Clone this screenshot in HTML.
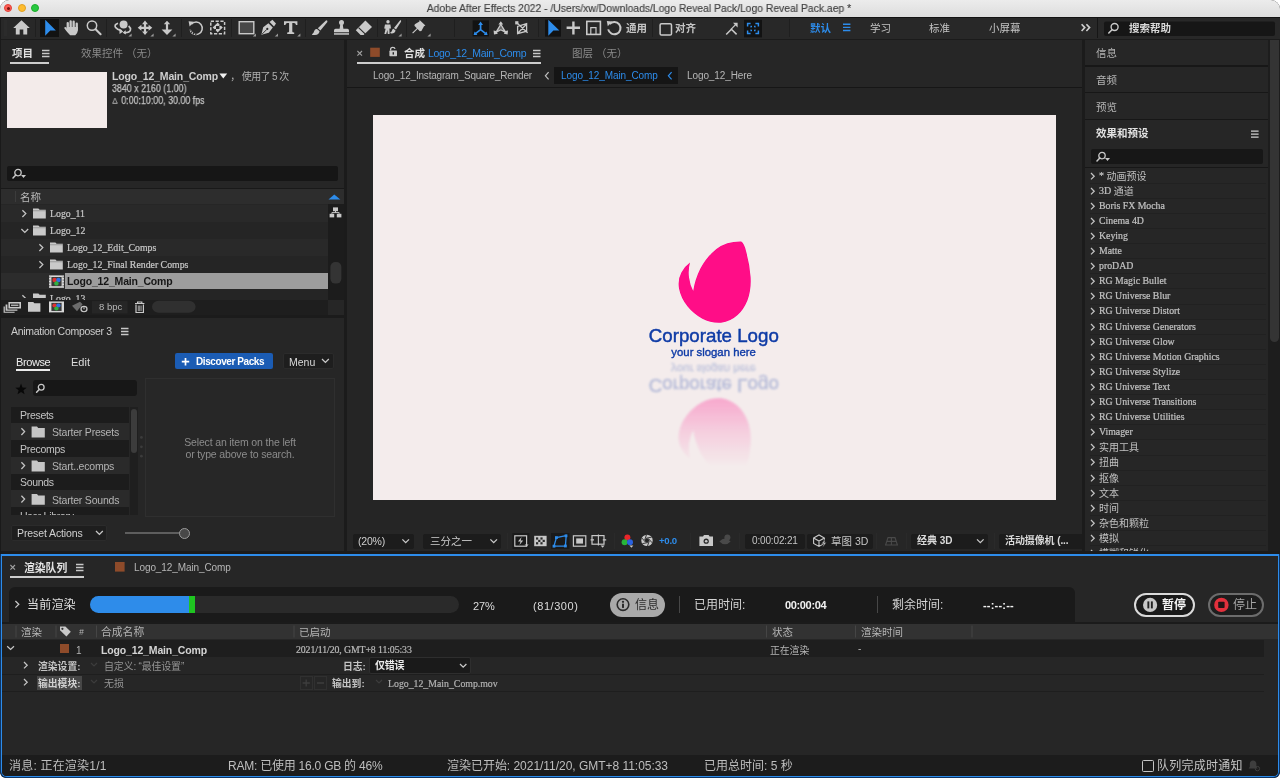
<!DOCTYPE html>
<html><head><meta charset="utf-8">
<style>
*{box-sizing:border-box;margin:0;padding:0}
html,body{width:1280px;height:778px;overflow:hidden;background:#fff}
body{font-family:"Liberation Sans","Noto Sans CJK SC",sans-serif;font-size:11px;color:#b4b4b4;position:relative}
.abs{position:absolute}
div{white-space:nowrap}
#win{position:absolute;left:0;top:0;width:1280px;height:778px;background:#1b1b1b;border-radius:9px 9px 6px 6px;overflow:hidden}
#title{position:absolute;left:0;top:0;width:1280px;height:16.5px;background:linear-gradient(#ececec,#dddddd)}
#title .t{position:absolute;left:0;width:1280px;top:1px;text-align:center;font-size:11px;color:#404040;-webkit-text-stroke:0.15px #404040;transform:scaleX(0.942);transform-origin:639px 0;left:-1.5px}
.tl{position:absolute;top:4.4px;width:8px;height:8px;border-radius:50%}
#toolbar{position:absolute;left:0;top:17px;width:1280px;height:22px;background:#282828;border-top:1px solid #131313}
.panel{position:absolute;background:#262626;overflow:hidden}
.serif{font-family:"Liberation Serif","Noto Sans CJK SC",serif;-webkit-text-stroke:0.22px currentColor}
.sans{font-family:"Liberation Sans","Noto Sans CJK SC",sans-serif;position:relative;top:0.6px;-webkit-text-stroke:0}
.t{position:absolute;line-height:14px;white-space:nowrap;will-change:transform}
.b{font-weight:bold}
.ul{position:absolute;height:2px;background:#cdcdcd}
.tb-t{will-change:transform;position:absolute;top:3px;font-size:10.5px;color:#c4c4c4;white-space:nowrap;line-height:14px}
.dim{color:#8a8a8a}
.wh{color:#e2e2e2}
.bl{color:#2d8ceb}
.box{position:absolute;background:#1c1c1c;border-radius:2px}
</style></head><body>
<div id="win">
<div id="title">
  <div class="tl" style="left:4.4px;background:#fe5f57;border:0.5px solid #e14138"><div style="position:absolute;left:2px;top:2px;width:3px;height:3px;border-radius:50%;background:#7a1510"></div></div>
  <div class="tl" style="left:17.9px;background:#febc2e;border:0.5px solid #dfa023"></div>
  <div class="tl" style="left:31px;background:#28c840;border:0.5px solid #1dad2b"></div>
  <div class="t">Adobe After Effects 2022 - /Users/xw/Downloads/Logo Reveal Pack/Logo Reveal Pack.aep *</div>
</div>
<div id="toolbar">
<svg class="abs" style="left:0;top:-1px" width="1280" height="22" viewBox="0 17 1280 22">
<g fill="#c9c9c9" stroke="none">
<!-- grip -->
<rect x="4" y="20" width="3" height="16" fill="#2b2b2b"/>
<rect x="35" y="19" width="1" height="18" fill="#1f1f1f"/>
<rect x="106" y="19" width="1" height="18" fill="#1f1f1f"/>
<rect x="181" y="19" width="1" height="18" fill="#1f1f1f"/>
<rect x="231" y="19" width="1" height="18" fill="#1f1f1f"/>
<rect x="305" y="19" width="1" height="18" fill="#1f1f1f"/>
<rect x="377" y="19" width="1" height="18" fill="#1f1f1f"/>
<rect x="406" y="19" width="1" height="18" fill="#1f1f1f"/>
<rect x="454" y="19" width="1" height="18" fill="#1f1f1f"/>
<rect x="538" y="19" width="1" height="18" fill="#1f1f1f"/>
<rect x="652" y="19" width="1" height="18" fill="#1f1f1f"/>
<rect x="789" y="19" width="1" height="18" fill="#1f1f1f"/>
<!-- home -->
<path d="M21.5 20.3 L29.8 27.9 H27.2 V34.5 H23.3 V29.6 H19.7 V34.5 H15.8 V27.9 H13.2 Z"/>
<!-- select (active) -->
<rect x="40" y="19" width="19" height="18" fill="#121212"/>
<path d="M45.2 19.8 L55.9 30.4 L50.2 30.6 L45.2 35.8 Z" fill="#2d8ceb"/>
<!-- hand -->
<g>
<rect x="66.6" y="22" width="2.3" height="8" rx="1.1"/>
<rect x="69.5" y="20.3" width="2.3" height="9" rx="1.1"/>
<rect x="72.5" y="20.6" width="2.3" height="9" rx="1.1"/>
<rect x="75.6" y="22.6" width="2.3" height="8" rx="1.1"/>
<path d="M66.6 27 H77.9 V30.5 Q77.5 33.5 75.3 35.2 H70.2 Q68 33.5 64.3 28.3 Q64.3 26.6 66 27.3 L67.6 29.5 Z"/>
</g>
<!-- zoom -->
<circle cx="92" cy="25.6" r="4.7" fill="none" stroke="#c9c9c9" stroke-width="1.5"/>
<path d="M95.6 29.2 L100.6 34.2" stroke="#c9c9c9" stroke-width="2.1" stroke-linecap="round"/>
<!-- orbit -->
<circle cx="123.6" cy="24.6" r="4"/>
<path d="M118 23.2 Q113.8 24.6 115.6 27.6 Q117.5 30.2 121.8 30.8 M124 32.6 Q129.4 33 130.4 30 Q130.8 27.8 128.6 26" fill="none" stroke="#c9c9c9" stroke-width="1.7"/>
<path d="M119.2 28.6 L123.2 31.4 L119.6 34 Z M125.6 30.2 L122.6 32.8 L126 34.6Z"/>
<path d="M131.6 33.4 V36.6 H128.4 Z" fill="#9a9a9a"/>
<!-- move -->
<path d="M145 20.6 L148 24.2 H146.1 V26.7 H148.6 V24.8 L152.3 27.8 L148.6 30.8 V28.9 H146.1 V31.4 H148 L145 35 L142 31.4 H143.9 V28.9 H141.4 V30.8 L137.7 27.8 L141.4 24.8 V26.7 H143.9 V24.2 H142 Z"/>
<path d="M153.6 33.4 V36.6 H150.4 Z" fill="#9a9a9a"/>
<!-- dolly -->
<path d="M167 20.8 L170.2 24.2 H168.1 V29.6 H172.4 L167 35 L161.6 29.6 H165.9 V24.2 H163.8 Z"/>
<path d="M175.6 33.4 V36.6 H172.4 Z" fill="#9a9a9a"/>
<!-- rotate -->
<path d="M191.3 24.3 A6.2 6.2 0 1 1 190 29.5" fill="none" stroke="#c9c9c9" stroke-width="1.5"/>
<path d="M190 29.5 A6.2 6.2 0 0 0 197 34.1" fill="none" stroke="#262626" stroke-width="1.7" stroke-dasharray="1.2 1.2"/>
<path d="M188.6 21.2 L193.8 21.8 L189.6 26.4 Z"/>
<!-- pan behind -->
<rect x="210.8" y="21.3" width="13.8" height="12.4" fill="none" stroke="#c9c9c9" stroke-width="1.5" stroke-dasharray="3.2 1.6"/>
<path d="M217.7 22.6 L221 26 H214.4 Z M217.7 32.4 L221 29 H214.4 Z M212.6 27.5 L216 24.2 V30.8 Z M222.8 27.5 L219.4 24.2 V30.8 Z"/>
<!-- rect -->
<rect x="239.2" y="21.7" width="14.6" height="12" fill="#484848" stroke="#c9c9c9" stroke-width="1.4"/>
<path d="M256 33.4 V36.6 H252.8 Z" fill="#9a9a9a"/>
<!-- pen -->
<path d="M261.4 34.8 L263.2 27.2 L268.4 23.2 L272.8 27.6 L268.8 32.8 Z M269.6 22 L272.4 19.8 L276 23.6 L274 26.4 Z"/>
<path d="M262.2 34 L266.6 29.6" stroke="#262626" stroke-width="0.9"/>
<circle cx="267.3" cy="28.9" r="1.1" fill="#262626"/>
<path d="M278 33.4 V36.6 H274.8 Z" fill="#9a9a9a"/>
<!-- T -->
<path d="M284 21.2 H297.4 V25 H296 Q295.6 22.9 294 22.9 H292.3 V31.4 Q292.3 32.5 294.2 32.6 V33.9 H287.2 V32.6 Q289.1 32.5 289.1 31.4 V22.9 H287.4 Q285.8 22.9 285.4 25 H284 Z"/>
<path d="M300.4 33.4 V36.6 H297.2 Z" fill="#9a9a9a"/>
<!-- brush -->
<path d="M326.2 20.2 Q327.8 20.4 327.4 22 L320.4 30.4 L317.8 28.2 Z"/>
<path d="M317 29 L319.6 31.2 Q319 34.6 315 35 Q312.6 35.2 311.8 34.4 Q314 33 314.2 31 Q314.8 28.8 317 29 Z"/>
<!-- stamp -->
<circle cx="341.5" cy="22.6" r="2.5"/>
<path d="M340.3 24 H342.7 L343.4 28.8 H347.4 Q349 28.8 349 30.4 V32.2 H334 V30.4 Q334 28.8 335.6 28.8 H339.6 Z"/>
<rect x="334" y="33.2" width="15" height="1.5"/>
<!-- eraser -->
<path d="M365.4 20.4 L372 27 L363.6 35 H360.6 L355.8 30.2 Z"/>
<path d="M358.6 27.6 L365.4 34.2" stroke="#262626" stroke-width="1.1"/>
<!-- roto -->
<circle cx="388" cy="21.8" r="1.7"/>
<path d="M385 24.4 H390.4 L391 28.4 L389.4 28.6 L389.6 34 H387.8 L387.4 30 L386.2 34 H384.4 L385.6 28.8 L384.2 28.6 Z"/>
<path d="M400.4 20 Q401.6 20.4 401 21.8 L396 29.4 L394 28 Z M393.4 28.8 L395.6 30.4 Q394.8 33.6 391.4 33.4 Q390.4 33.4 390 32.8 Q391.8 31.8 392 30.4 Q392.4 28.8 393.4 28.8Z"/>
<path d="M401.6 33.4 V36.6 H398.4 Z" fill="#9a9a9a"/>
<!-- pin -->
<path d="M419.6 20 L425.4 25.6 L424 26.2 L421.4 31 L419.8 31.2 L417.6 29 L413 33.6 L412.2 32.8 L416.8 28.2 L414.4 25.8 L414.8 24.2 L419.4 21.6 Z"/>
<path d="M430.6 33.4 V36.6 H427.4 Z" fill="#9a9a9a"/>
<!-- axis 1 active -->
<rect x="472.6" y="20.4" width="16.4" height="16" fill="#121212"/>
<g stroke="#2d8ceb" stroke-width="1.7" fill="#2d8ceb">
<path d="M480.6 24 V29.6 M480.6 29.6 L475.4 33.6 M480.6 29.6 L485.8 33.6" fill="none"/>
<path d="M480.6 21.4 L483 25 H478.2 Z M473.6 35 L474.6 31.4 L477.4 35 Z M487.6 35 L486.6 31.4 L483.8 35 Z" stroke="none"/>
</g>
<!-- axis 2 -->
<g fill="#c9c9c9">
<path d="M500.8 21.2 L503.2 24.6 H501.6 L505.6 31 L508 30.6 L507.6 34.4 L503.8 33.8 L504.6 32.4 L500.8 30.4 L497 32.4 L497.8 33.8 L494 34.4 L493.6 30.6 L496 31 L500 24.6 H498.4 Z"/>
<path d="M500.8 25.6 L503.6 30.4 L500.8 29.2 L498 30.4 Z" fill="#6a6a6a"/>
</g>
<!-- axis 3 -->
<g stroke="#c9c9c9" stroke-width="1.3" fill="none">
<path d="M517.6 26.4 L526.6 23.6 V31.2 L517.6 33.6 Z M517 23 L527.6 32.8 M517.8 33.2 L526.4 24.2"/>
<rect x="515.2" y="21.2" width="3.2" height="3.2" fill="#c9c9c9" stroke="none"/>
</g>
<!-- arrow active 2 -->
<rect x="545" y="19.6" width="16" height="17" fill="#121212"/>
<path d="M548.3 19.8 L559.4 30.4 L553.4 30.6 L548.3 35.8 Z" fill="#2d8ceb"/>
<!-- plus -->
<path d="M572.2 21.6 H574.6 V26.6 H580 V29 H574.6 V34.4 H572.2 V29 H566.6 V26.6 H572.2 Z"/>
<!-- square -->
<rect x="586.8" y="21.4" width="13.6" height="13" fill="none" stroke="#c9c9c9" stroke-width="1.6"/>
<path d="M590.8 34 V27.6 H596 V34" fill="none" stroke="#c9c9c9" stroke-width="1.2"/>
<!-- rotate2 -->
<path d="M609.6 24 A6.2 6.2 0 1 1 608.2 29.4" fill="none" stroke="#c9c9c9" stroke-width="2"/>
<path d="M606.8 21 L612 21.6 L607.8 26.2 Z"/>
<!-- checkbox -->
<rect x="660.1" y="23.7" width="11.4" height="11.4" rx="1.4" fill="none" stroke="#c9c9c9" stroke-width="1.5"/>
<!-- snap1 -->
<path d="M726.2 34.6 L731.4 29.2 L736.6 34.4" fill="none" stroke="#c9c9c9" stroke-width="1.5"/>
<path d="M731 29.4 L735.6 24.6" stroke="#c9c9c9" stroke-width="1.3"/>
<path d="M733 22.8 H737.6 V27.4 Z"/>
<!-- snap2 active -->
<rect x="744" y="19.8" width="18" height="17.6" fill="#121212"/>
<g fill="none" stroke="#2d8ceb" stroke-width="1.5">
<path d="M747.6 26.4 V23.6 H750.6 M755.4 23.6 H758.4 V26.4 M758.4 30.6 V33.4 H755.4 M750.6 33.4 H747.6 V30.6"/>
<path d="M751 27.4 V26.4 H752 M754 26.4 H755 V27.4 M755 29.6 V30.6 H754 M752 30.6 H751 V29.6" stroke-width="1.2"/>
</g>
<!-- menu glyph -->
<path d="M843 24.3 H850.4 M843 27.4 H850.4 M843 30.5 H850.4" stroke="#2d8ceb" stroke-width="1.4"/>
<!-- chevrons -->
<path d="M1081.6 24.2 L1084.8 27.6 L1081.6 31 M1086.4 24.2 L1089.6 27.6 L1086.4 31" fill="none" stroke="#d0d0d0" stroke-width="1.6"/>
<!-- search box -->
<rect x="1097" y="18" width="1" height="20" fill="#161616"/>
<rect x="1104" y="21.6" width="171" height="14.4" rx="2" fill="#161616"/>
<circle cx="1114.6" cy="27" r="3.5" fill="none" stroke="#c9c9c9" stroke-width="1.4"/>
<path d="M1112 29.8 L1108.8 33" stroke="#c9c9c9" stroke-width="1.6" stroke-linecap="round"/>
</g>
</svg>
<div class="tb-t b" style="left:626px">通用</div>
<div class="tb-t b" style="left:675px">对齐</div>
<div class="tb-t" style="left:810px;color:#2d8ceb;font-weight:bold">默认</div>
<div class="tb-t" style="left:870px">学习</div>
<div class="tb-t" style="left:929px">标准</div>
<div class="tb-t" style="left:989px">小屏幕</div>
<div class="tb-t" style="left:1129px;color:#d8d8d8;font-weight:bold">搜索帮助</div>
</div>
<!-- PROJECT PANEL : page origin (0,40) -->
<div class="panel" id="proj" style="left:0;top:40px;width:344px;height:275px">
  <div class="t b wh" style="left:12px;top:6px;font-size:10.5px">项目</div>
  <svg class="abs" style="left:42px;top:9px" width="8" height="9"><path d="M0 1.5H7.5M0 4.5H7.5M0 7.5H7.5" stroke="#c8c8c8" stroke-width="1.3"/></svg>
  <div class="ul" style="left:10px;top:21.5px;width:39px"></div>
  <div class="t dim" style="left:81px;top:6px;font-size:10.5px">效果控件 （无）</div>
  <div class="abs" style="left:7px;top:32px;width:100px;height:56px;background:#f3ebea"></div>
  <div class="t b" style="left:112px;top:29px;font-size:10.5px;color:#cfcfcf;letter-spacing:-0.15px">Logo_12_Main_Comp<svg width="9" height="6" style="margin-left:1px;position:relative;top:-1px"><path d="M0.4 0.4H8.2L4.3 5.4Z" fill="#f0f0f0"/></svg><span class="nb" style="font-weight:normal;font-size:10px;color:#b0b0b0;letter-spacing:-0.6px"> ， 使用了 5 次</span></div>
  <div class="t" style="left:112px;top:41px;font-size:10.5px;color:#c4c4c4;-webkit-text-stroke:0.25px #c4c4c4;transform:scaleX(0.845);transform-origin:0 0">3840 x 2160 (1.00)</div>
  <div class="t" style="left:112px;top:53px;font-size:10.5px;color:#c4c4c4;-webkit-text-stroke:0.25px #c4c4c4;transform:scaleX(0.845);transform-origin:0 0"><svg width="7" height="7" style="position:relative;top:0px;margin-right:1px"><path d="M0.7 6.3 L3.5 1 L6.3 6.3Z" fill="none" stroke="#c0c0c0" stroke-width="0.9"/></svg> 0:00:10:00, 30.00 fps</div>
  <!-- search -->
  <div class="abs" style="left:7px;top:126px;width:331px;height:15px;background:#161616;border-radius:2px"></div>
  <svg class="abs" style="left:12px;top:128px" width="16" height="12"><circle cx="6" cy="4.6" r="3.2" fill="none" stroke="#c8c8c8" stroke-width="1.3"/><path d="M3.8 7 L1 10" stroke="#c8c8c8" stroke-width="1.5" stroke-linecap="round"/><path d="M9 7H14L11.5 9.9Z" fill="#c8c8c8"/></svg>
  <!-- header -->
  <div class="abs" style="left:0;top:148px;width:344px;height:1px;background:#191919"></div>
  <div class="abs" style="left:0;top:149px;width:344px;height:15px;background:#2d2d2d"></div>
  <div class="abs" style="left:15px;top:151px;width:1px;height:11px;background:#3c3c3c"></div>
  <div class="t" style="left:20px;top:150px;font-size:10.5px;color:#b8b8b8">名称</div>
  <svg class="abs" style="left:328px;top:154px" width="13" height="6"><path d="M0.5 5.5 L6.3 0.5 L12.3 5.5Z" fill="#2d8ceb"/></svg>
  <!-- rows -->
  <div class="abs" style="left:0;top:165px;width:328px;height:17px;background:#292929"></div>
  <div class="abs" style="left:0;top:182px;width:328px;height:17px;background:#252525"></div>
  <div class="abs" style="left:0;top:199px;width:328px;height:17px;background:#292929"></div>
  <div class="abs" style="left:0;top:216px;width:328px;height:17px;background:#252525"></div>
  <div class="abs" style="left:0;top:233px;width:328px;height:16px;background:#2c2c2c"></div>
  <div class="abs" style="left:65px;top:233px;width:263px;height:16px;background:#9d9d9d"></div>
  <div class="abs" style="left:0;top:249px;width:328px;height:10.5px;background:#252525"></div>
  <div class="abs" style="left:328px;top:164px;width:16px;height:95.5px;background:#1c1c1c"></div>
  <svg class="abs" style="left:0;top:164px" width="344" height="94" viewBox="0 204 344 94">
    <g fill="none" stroke="#c4c4c4" stroke-width="1.3">
      <path d="M22.4 210.2 L25.8 213.6 L22.4 217"/>
      <path d="M21.4 229 L24.8 232.4 L28.2 229"/>
      <path d="M39.4 244.2 L42.8 247.6 L39.4 251"/>
      <path d="M39.4 261.2 L42.8 264.6 L39.4 268"/>
      <path d="M22.4 295.2 L25.8 298.6"/>
    </g>
    <g fill="#c9c9c9">
      <path d="M33 208.4 H38.4 L39.6 209.8 H45.8 V218.6 H33Z"/>
      <path d="M33 225.4 H38.4 L39.6 226.8 H45.8 V235.6 H33Z"/>
      <path d="M50 242.4 H55.4 L56.6 243.8 H62.8 V252.6 H50Z"/>
      <path d="M50 259.4 H55.4 L56.6 260.8 H62.8 V269.6 H50Z"/>
      <path d="M33 293.4 H38.4 L39.6 294.8 H45.8 V298 H33Z"/>
    </g>
    <g fill="#262626" opacity="0.35"><rect x="33" y="210.4" width="12.8" height="0.8"/><rect x="33" y="227.4" width="12.8" height="0.8"/><rect x="50" y="244.4" width="12.8" height="0.8"/><rect x="50" y="261.4" width="12.8" height="0.8"/></g>
    <!-- comp icon -->
    <g>
      <rect x="49" y="275.4" width="15" height="12.4" fill="#d8d8d8"/>
      <rect x="51.4" y="277" width="10.2" height="9.2" fill="#3a3a3a"/>
      <circle cx="54.6" cy="280" r="2.2" fill="#e03030"/><circle cx="58.4" cy="280" r="2.2" fill="#3070e0"/><circle cx="56.4" cy="283.4" r="2.2" fill="#30b040"/>
      <path d="M49.8 276.6v1.4M49.8 279.4v1.4M49.8 282.2v1.4M49.8 285v1.4M63.2 276.6v1.4M63.2 279.4v1.4M63.2 282.2v1.4M63.2 285v1.4" stroke="#555" stroke-width="0.9"/>
    </g>
    <!-- flowchart icon -->
    <g fill="#c9c9c9"><rect x="333" y="207.4" width="5" height="3.8"/><rect x="329.6" y="213.8" width="4.6" height="3.6"/><rect x="336.8" y="213.8" width="4.6" height="3.6"/><path d="M335.5 211v1.6M331.9 213.8v-1.2h7.2v1.2" stroke="#c9c9c9" fill="none" stroke-width="1"/></g>
    <rect x="330.4" y="262" width="11" height="21.6" rx="5" fill="#343434"/>
  </svg>
  <div class="t serif" style="left:50px;top:166.5px;font-size:9.8px;color:#c6c6c6">Logo_11</div>
  <div class="t serif" style="left:50px;top:183.5px;font-size:9.8px;color:#c6c6c6">Logo_12</div>
  <div class="t serif" style="left:67px;top:200.5px;font-size:9.8px;color:#c6c6c6">Logo_12_Edit_Comps</div>
  <div class="t serif" style="left:67px;top:217.5px;font-size:9.8px;color:#c6c6c6">Logo_12_Final Render Comps</div>
  <div class="t b" style="left:67px;top:234px;font-size:10.5px;color:#161616;letter-spacing:-0.18px">Logo_12_Main_Comp</div>
  <div class="t serif" style="left:50px;top:251.5px;font-size:9.8px;color:#c6c6c6">Logo_13</div>
  <!-- footer -->
  <div class="abs" style="left:0;top:259.5px;width:344px;height:15.5px;background:#262626"></div>
  <div class="abs" style="left:0;top:259.5px;width:328px;height:15.5px;background:#1e1e1e"></div>
  <svg class="abs" style="left:0;top:258px" width="344" height="17" viewBox="0 298 344 17">
    <g fill="#c9c9c9" transform="translate(0,307) scale(1,0.88) translate(0,-306.3)">
      <path d="M8.4 300.6 H21 V308 H8.4Z M5.6 303.4 H7.4 V309.2 H17.4 V310.6 H5.6Z M3.6 305.6 H4.8 V311.6 H14.6 V312.8 H3.6Z"/>
      <rect x="10" y="302.4" width="9.4" height="3.8" fill="#1e1e1e"/><rect x="11" y="303.6" width="7.4" height="1.4" fill="#c9c9c9"/>
      <path d="M28 300.6 H33.2 L34.4 302 H40.4 V311.8 H28Z"/>
      <rect x="49" y="300" width="15" height="12.4" fill="#d8d8d8"/>
      <rect x="51.4" y="301.6" width="10.2" height="9.2" fill="#3a3a3a"/>
      <circle cx="54.6" cy="304.6" r="2.2" fill="#e03030"/><circle cx="58.4" cy="304.6" r="2.2" fill="#3070e0"/><circle cx="56.4" cy="308" r="2.2" fill="#30b040"/>
      <g opacity="0.45"><path d="M72 305 L80 300.4 L82.6 303.2 L77 311 Z"/></g>
      <circle cx="84" cy="308.6" r="3" fill="#1e1e1e" stroke="#c9c9c9" stroke-width="1.2"/><path d="M84 306.6V308.8" stroke="#c9c9c9" stroke-width="1.1"/>
      <rect x="92" y="299.6" width="35.6" height="14" fill="#262626"/>
      <path d="M135 302.4 H144.4 M137.6 302.2 V300.6 H141.8 V302.2 M136 303.4 V312.6 H143.4 V303.4" fill="none" stroke="#c9c9c9" stroke-width="1.2"/>
      <path d="M138.3 304.6V311M139.7 304.6V311M141.1 304.6V311" stroke="#c9c9c9" stroke-width="0.8"/>
      <rect x="152" y="299.2" width="43.6" height="13.6" rx="6.8" fill="#303030"/>
    </g>
  </svg>
  <div class="t" style="left:99px;top:260px;font-size:9.5px;color:#b8b8b8">8 bpc</div>
</div>
<!-- AC PANEL : origin (0,318) -->
<div class="panel" id="ac" style="left:0;top:318px;width:344px;height:233px">
  <div class="t" style="left:11px;top:6px;font-size:10.5px;color:#cdcdcd;letter-spacing:-0.3px">Animation Composer 3</div>
  <svg class="abs" style="left:121px;top:9px" width="8" height="9"><path d="M0 1.5H7.5M0 4.5H7.5M0 7.5H7.5" stroke="#c8c8c8" stroke-width="1.3"/></svg>
  <div class="t" style="left:16px;top:36.5px;font-size:11px;color:#ededed;letter-spacing:-0.4px">Browse</div>
  <div class="ul" style="left:16px;top:51px;width:34px;background:#ededed"></div>
  <div class="t" style="left:71px;top:36.5px;font-size:11px;color:#dcdcdc">Edit</div>
  <div class="abs" style="left:175px;top:35px;width:98px;height:16px;background:#1b5cb4;border-radius:2px"></div>
  <svg class="abs" style="left:181px;top:39px" width="10" height="10"><path d="M4.5 1V8.4M0.8 4.7H8.2" stroke="#fff" stroke-width="1.7"/></svg><div class="t b" style="left:196px;top:37px;font-size:10px;color:#fff;letter-spacing:-0.42px">Discover Packs</div>
  <div class="abs" style="left:283px;top:35px;width:51px;height:16px;background:#1e1e1e;border:1px solid #2b2b2b;border-radius:2px"></div>
  <div class="t" style="left:288.5px;top:36.5px;font-size:10.5px;color:#dadada">Menu</div>
  <svg class="abs" style="left:321px;top:40px" width="9" height="6"><path d="M1 1 L4.4 4.4 L7.8 1" fill="none" stroke="#c8c8c8" stroke-width="1.3"/></svg>
  <!-- star + search -->
  <svg class="abs" style="left:14.5px;top:64.5px" width="13" height="13" viewBox="0 0 14 14"><path d="M6.5 0.6 L8.1 4.8 L12.6 5 L9.1 7.8 L10.3 12.2 L6.5 9.7 L2.7 12.2 L3.9 7.8 L0.4 5 L4.9 4.8Z" fill="#080808"/></svg>
  <div class="abs" style="left:33px;top:62px;width:104px;height:16px;background:#171717;border-radius:3px"></div>
  <svg class="abs" style="left:35px;top:65px" width="11" height="11"><circle cx="6.2" cy="4.2" r="2.9" fill="none" stroke="#c8c8c8" stroke-width="1.3"/><path d="M4.2 6.4 L1.6 9.2" stroke="#c8c8c8" stroke-width="1.5" stroke-linecap="round"/></svg>
  <!-- list -->
  <div class="abs" style="left:11px;top:89px;width:118px;height:108px;overflow:hidden;background:#2a2a2a">
    <div class="abs" style="left:0;top:0;width:118px;height:16px;background:#1c1c1c"></div>
    <div class="abs" style="left:0;top:33px;width:118px;height:17px;background:#1c1c1c"></div>
    <div class="abs" style="left:0;top:67px;width:118px;height:16px;background:#1c1c1c"></div>
    <div class="abs" style="left:0;top:100px;width:118px;height:16px;background:#1c1c1c"></div>
    <div class="t" style="left:8.5px;top:1px;font-size:10.5px;color:#c4c4c4;letter-spacing:-0.3px">Presets</div>
    <div class="t" style="left:41px;top:18px;font-size:10.5px;color:#b4b4b4;letter-spacing:-0.2px">Starter Presets</div>
    <div class="t" style="left:8.5px;top:35px;font-size:10.5px;color:#c4c4c4;letter-spacing:-0.3px">Precomps</div>
    <div class="t" style="left:41px;top:52px;font-size:10.5px;color:#b4b4b4;letter-spacing:-0.2px">Start..ecomps</div>
    <div class="t" style="left:8.5px;top:68px;font-size:10.5px;color:#c4c4c4;letter-spacing:-0.3px">Sounds</div>
    <div class="t" style="left:41px;top:85.5px;font-size:10.5px;color:#b4b4b4;letter-spacing:-0.2px">Starter Sounds</div>
    <div class="t" style="left:8.5px;top:102px;font-size:10.5px;color:#c4c4c4;letter-spacing:-0.3px">User Library</div>
    <svg class="abs" style="left:0;top:0" width="118" height="108">
      <g fill="none" stroke="#c4c4c4" stroke-width="1.3"><path d="M10.4 21.2 L13.6 24.6 L10.4 28"/><path d="M10.4 55.2 L13.6 58.6 L10.4 62"/><path d="M10.4 88.7 L13.6 92.1 L10.4 95.5"/></g>
      <g fill="#c6c6c6"><path d="M20.6 19.6 H26 L27.2 21 H33.8 V30.4 H20.6Z"/><path d="M20.6 53.6 H26 L27.2 55 H33.8 V64.4 H20.6Z"/><path d="M20.6 87 H26 L27.2 88.4 H33.8 V97.8 H20.6Z"/></g>
    </svg>
  </div>
  <div class="abs" style="left:130px;top:89px;width:8px;height:108px;background:#1f1f1f"></div>
  <div class="abs" style="left:131px;top:91px;width:6px;height:44px;background:#3c3c3c;border-radius:3px"></div>
  <svg class="abs" style="left:139px;top:116px" width="5" height="26"><circle cx="2.4" cy="3.4" r="1.4" fill="#3c3c3c"/><circle cx="2.4" cy="12.8" r="1.4" fill="#3c3c3c"/><circle cx="2.4" cy="22.2" r="1.4" fill="#3c3c3c"/></svg>
  <div class="abs" style="left:145px;top:60px;width:190px;height:139px;border:1px solid #2f2f2f;background:#272727"></div>
  <div class="t" style="left:145px;top:116.5px;width:190px;text-align:center;font-size:10.5px;color:#8c8c8c;letter-spacing:-0.15px">Select an item on the left</div>
  <div class="t" style="left:145px;top:129px;width:190px;text-align:center;font-size:10.5px;color:#8c8c8c;letter-spacing:-0.15px">or type above to search.</div>
  <!-- preset actions -->
  <div class="abs" style="left:11px;top:207px;width:96px;height:16px;background:#1e1e1e;border:1px solid #2b2b2b;border-radius:2px"></div>
  <div class="t" style="left:16.5px;top:208px;font-size:10.5px;color:#d0d0d0;letter-spacing:-0.1px">Preset Actions</div>
  <svg class="abs" style="left:95px;top:212px" width="9" height="6"><path d="M1 1 L4.4 4.4 L7.8 1" fill="none" stroke="#c8c8c8" stroke-width="1.3"/></svg>
  <div class="abs" style="left:125px;top:214px;width:55px;height:2px;background:#5e5e5e"></div>
  <div class="abs" style="left:178.5px;top:209.5px;width:11px;height:11px;border-radius:50%;background:#484848;border:1.5px solid #9a9a9a"></div>
</div>
<!-- COMP PANEL : origin (347,40) -->
<div class="panel" id="comp" style="left:347px;top:40px;width:735px;height:511px">
  <svg class="abs" style="left:0;top:0" width="300" height="25" viewBox="347 40 300 25">
    <path d="M357.4 51 L362 55.6 M362 51 L357.4 55.6" stroke="#a0a0a0" stroke-width="1.1"/>
    <rect x="370.2" y="47.7" width="9.6" height="9.2" fill="#8e4b2a"/>
    <g fill="#c9c9c9"><rect x="389.4" y="50.6" width="7.6" height="5.6" rx="0.6"/><path d="M390.6 50.6 V49.4 Q390.6 47.4 392.8 47.4 Q394.8 47.4 395 48.8" fill="none" stroke="#c9c9c9" stroke-width="1.3"/><rect x="392.6" y="52.2" width="1.4" height="2.4" fill="#262626"/></g>
    <path d="M533 50.5H540.5M533 53.5H540.5M533 56.5H540.5" stroke="#c8c8c8" stroke-width="1.3"/>
  </svg>
  <div class="t b wh" style="left:57px;top:6px;font-size:10.5px">合成</div>
  <div class="t bl" style="left:81px;top:6px;font-size:10.5px;letter-spacing:-0.3px">Logo_12_Main_Comp</div>
  <div class="ul" style="left:10px;top:21.5px;width:184px"></div>
  <div class="t dim" style="left:225px;top:6px;font-size:10.5px">图层 （无）</div>
  <!-- breadcrumb -->
  <div class="t" style="left:26px;top:29px;font-size:10px;color:#b6b6b6;letter-spacing:-0.2px">Logo_12_Instagram_Square_Render</div>
  <svg class="abs" style="left:197px;top:31px" width="6" height="10"><path d="M4.6 1.2 L1.4 4.8 L4.6 8.4" fill="none" stroke="#c0c0c0" stroke-width="1.2"/></svg>
  <div class="abs" style="left:207px;top:27px;width:124px;height:17px;background:#151515"></div>
  <div class="t bl" style="left:214px;top:29px;font-size:10px;letter-spacing:-0.1px">Logo_12_Main_Comp</div>
  <svg class="abs" style="left:320px;top:31px" width="6" height="10"><path d="M4.6 1.2 L1.4 4.8 L4.6 8.4" fill="none" stroke="#2d8ceb" stroke-width="1.2"/></svg>
  <div class="t" style="left:340px;top:29px;font-size:10px;color:#b6b6b6;letter-spacing:-0.1px">Logo_12_Here</div>
  <div class="abs" style="left:0;top:47px;width:735px;height:1px;background:#161616"></div>
  <div class="abs" style="left:0;top:48px;width:735px;height:442px;background:#252525"></div>
  <!-- composition -->
  <div class="abs" id="cv" style="left:26px;top:75px;width:683px;height:385px;background:#f4ecec;overflow:hidden">
  <svg class="abs" style="left:0;top:0" width="683" height="385" viewBox="373 115 683 385">
<defs>
<filter id="bl1" x="-10%" y="-10%" width="120%" height="120%"><feGaussianBlur stdDeviation="1.3"/></filter>
<filter id="bl0" x="-10%" y="-10%" width="120%" height="120%"><feGaussianBlur stdDeviation="0.45"/></filter>
<linearGradient id="fade" x1="0" y1="361" x2="0" y2="467" gradientUnits="userSpaceOnUse">
<stop offset="0" stop-color="#fff" stop-opacity="0.2"/><stop offset="0.2" stop-color="#fff" stop-opacity="0.27"/><stop offset="0.36" stop-color="#fff" stop-opacity="0.3"/><stop offset="0.65" stop-color="#fff" stop-opacity="0.14"/><stop offset="1" stop-color="#fff" stop-opacity="0"/>
</linearGradient>
<mask id="mk" maskUnits="userSpaceOnUse" x="373" y="355" width="683" height="145"><rect x="373" y="355" width="683" height="145" fill="url(#fade)"/></mask>
<g id="lg">
<path d="M741.2 241.6 Q744.2 243.6 746 251 Q749.6 264 750.6 277 Q751.4 290 747.4 300.4 Q743.6 309.6 737.6 315 Q730.6 321.4 721 322.8 Q711 323.4 702.4 318.8 Q694 314.4 687.6 306.6 Q681 298.6 679 288.6 Q677.6 279.4 681.4 272.6 Q684.6 266.4 690 262.6 Q688 270 689 277.4 Q690 285 693.2 291 Q695 279.4 700.4 268.6 Q706.4 257 716.4 249 Q726.6 241.4 741.2 241.6 Z" fill="#ff0787"/>
<text x="713.8" y="342.4" text-anchor="middle" font-family="Liberation Sans, sans-serif" font-size="18.6" fill="#0d3ba6" stroke="#0d3ba6" stroke-width="0.45" textLength="130" lengthAdjust="spacingAndGlyphs">Corporate Logo</text>
<text x="713.6" y="355.8" text-anchor="middle" font-family="Liberation Sans, sans-serif" font-size="11.6" fill="#0d3ba6" stroke="#0d3ba6" stroke-width="0.4" textLength="84.5" lengthAdjust="spacingAndGlyphs">your slogan here</text>
</g>
</defs>
<use href="#lg" filter="url(#bl0)"/>
<g mask="url(#mk)"><g transform="translate(0,721) scale(1,-1)" filter="url(#bl1)"><use href="#lg"/></g></g>
</svg>

  </div>
  <!-- footer -->
  <div class="abs" style="left:0;top:490px;width:735px;height:21px;background:#262626"></div>
  <div class="box" style="left:6px;top:493.5px;width:61px;height:15px"></div>
  <div class="t" style="left:11px;top:494px;font-size:10.5px;color:#cfcfcf;letter-spacing:-0.2px">(20%)</div>
  <div class="box" style="left:76px;top:493.5px;width:78px;height:15px"></div>
  <div class="t" style="left:82.5px;top:494px;font-size:10.5px;color:#cfcfcf">三分之一</div>
  <div class="box" style="left:398px;top:493.5px;width:60px;height:15px"></div>
  <div class="t" style="left:405px;top:494px;font-size:10px;color:#c4c4c4;letter-spacing:-0.15px">0:00:02:21</div>
  <div class="box" style="left:460px;top:493.5px;width:66px;height:15px"></div>
  <div class="t" style="left:483.5px;top:494px;font-size:10.5px;color:#c4c4c4">草图 3D</div>
  <div class="box" style="left:564px;top:493.5px;width:77px;height:15px"></div>
  <div class="t b" style="left:569.5px;top:494px;font-size:10px;color:#dadada">经典 3D</div>
  <div class="box" style="left:652px;top:493.5px;width:83px;height:15px;border-radius:2px 0 0 2px"></div>
  <div class="t b" style="left:658px;top:494px;font-size:10px;color:#dadada;letter-spacing:-0.1px">活动摄像机 (...</div>
  <div class="t bl b" style="left:311.5px;top:494px;font-size:9.6px;letter-spacing:-0.25px">+0.0</div>
  <svg class="abs" style="left:0;top:490px" width="735" height="21" viewBox="347 530 735 21">
    <g fill="none" stroke="#c8c8c8" stroke-width="1.3">
      <path d="M402.4 539.4 L405.7 542.7 L409 539.4"/><path d="M490.4 539.4 L493.7 542.7 L497 539.4"/><path d="M977 539.4 L980.3 542.7 L983.6 539.4"/>
    </g>
    <g fill="#2a2a2a"><rect x="507" y="533" width="1" height="16"/><rect x="614" y="533" width="1" height="16"/><rect x="690" y="533" width="1" height="16"/><rect x="739" y="533" width="1" height="16"/><rect x="876" y="533" width="1" height="16"/><rect x="906" y="533" width="1" height="16"/><rect x="994" y="533" width="1" height="16"/></g>
    <!-- icon1 fast preview -->
    <rect x="512.4" y="533" width="17" height="16" fill="#1a1a1a"/>
    <rect x="514.8" y="535.8" width="11.8" height="10.4" fill="none" stroke="#c8c8c8" stroke-width="1.2"/>
    <path d="M521.6 537 L518 541.4 H520.6 L519.4 545 L523.2 540.4 H520.6 Z" fill="#c8c8c8"/><path d="M524.6 544.4H528.6L526.6 546.6Z" fill="#c8c8c8"/>
    <!-- icon2 checker -->
    <rect x="534.2" y="535.8" width="12.4" height="10.4" fill="#c8c8c8"/>
    <g fill="#2a2a2a"><rect x="536" y="537.4" width="2.2" height="2.2"/><rect x="540.4" y="537.4" width="2.2" height="2.2"/><rect x="538.2" y="539.8" width="2.2" height="2.2"/><rect x="542.6" y="539.8" width="2.2" height="2.2"/><rect x="536" y="542.2" width="2.2" height="2.2"/><rect x="540.4" y="542.2" width="2.2" height="2.2"/></g>
    <!-- icon3 mask blue -->
    <rect x="551" y="533" width="18.4" height="16" fill="#1a1a1a"/>
    <path d="M556.4 537.6 L566.2 535.6 L565.4 546 L554 546.2 Z" fill="none" stroke="#2d8ceb" stroke-width="1.3"/>
    <g fill="#2d8ceb"><rect x="555" y="536.2" width="2.8" height="2.8"/><rect x="564.6" y="534.4" width="2.8" height="2.8"/><rect x="564" y="544.6" width="2.8" height="2.8"/><rect x="552.6" y="544.8" width="2.8" height="2.8"/></g>
    <!-- icon4 -->
    <rect x="573.4" y="535.8" width="12.4" height="10.4" fill="none" stroke="#c8c8c8" stroke-width="1.2"/><rect x="576.2" y="538.4" width="6.8" height="5.2" fill="#c8c8c8"/>
    <!-- icon5 -->
    <rect x="592" y="535.6" width="12" height="8.6" fill="none" stroke="#c8c8c8" stroke-width="1.2"/><path d="M598.4 534.4V545.4M590.6 539.9H594M602.8 539.9H606.2" stroke="#c8c8c8" stroke-width="1.1"/><path d="M600.6 545.6H604.6L602.6 547.8Z" fill="#c8c8c8"/>
    <!-- rgb -->
    <circle cx="627.4" cy="537.6" r="3" fill="#e8262a"/><circle cx="624.6" cy="542.2" r="3" fill="#27b53a"/><circle cx="630" cy="542.2" r="3" fill="#2a62e0"/><path d="M629.4 545.6H633.4L631.4 547.8Z" fill="#c8c8c8"/>
    <!-- aperture -->
    <circle cx="647" cy="540.4" r="5.7" fill="#c8c8c8"/><polygon points="649.27,540.80 647.79,542.56 645.52,542.16 644.73,540.00 646.21,538.24 648.48,538.64" fill="#262626"/><path d="M649.27 540.80L647.50 546.08M647.79 542.56L642.33 543.67M645.52 542.16L641.83 537.99M644.73 540.00L646.50 534.72M646.21 538.24L651.67 537.13M648.48 538.64L652.17 542.81" stroke="#262626" stroke-width="0.9"/>
    <!-- camera -->
    <path d="M699.4 536.6 H703 L704 535 H708.6 L709.6 536.6 H713 V546 H699.4 Z" fill="#c8c8c8"/><circle cx="706.2" cy="541.2" r="2.6" fill="#262626"/><circle cx="706.2" cy="541.2" r="1.3" fill="#c8c8c8"/>
    <!-- faded -->
    <g opacity="0.22"><path d="M719.4 541.4 Q725 535.6 730.6 541.4 Q725 547.2 719.4 541.4Z" fill="#c8c8c8"/><circle cx="727.4" cy="537.4" r="3" fill="#c8c8c8"/></g>
    <!-- draft 3d icon -->
    <path d="M813.6 538 L819 535 L824.4 538 V543.4 L819 546.4 L813.6 543.4 Z M813.6 538 L819 541 L824.4 538 M819 541 V546.4" fill="none" stroke="#c8c8c8" stroke-width="1.1"/>
    <path d="M824.6 539.6 L821.4 543.8 H823.6 L822.6 547.4 L826.4 542.6 H824 Z" fill="#c8c8c8" stroke="#1c1c1c" stroke-width="0.5"/>
    <g opacity="0.22"><path d="M888 537.6 H895 L897.4 545 H885.6 Z M886.6 541.4 H896.2 M891.4 537.6V545" fill="none" stroke="#c8c8c8" stroke-width="1.1"/></g>
  </svg>

</div>
<!-- RIGHT PANEL : origin (1085,40) -->
<div class="panel" id="right" style="left:1085px;top:40px;width:195px;height:511px">
<div class="t" style="left:10.5px;top:6px;font-size:10.5px;color:#b4b4b4">信息</div>
<div class="abs" style="left:0;top:25px;width:184px;height:1.5px;background:#171717"></div>
<div class="t" style="left:10.5px;top:33px;font-size:10.5px;color:#b4b4b4">音频</div>
<div class="abs" style="left:0;top:51.5px;width:184px;height:1.5px;background:#171717"></div>
<div class="t" style="left:10.5px;top:59.5px;font-size:10.5px;color:#b4b4b4">预览</div>
<div class="abs" style="left:0;top:78.5px;width:184px;height:1.5px;background:#171717"></div>
<div class="t b wh" style="left:11px;top:86px;font-size:10.5px">效果和预设</div>
<svg class="abs" style="left:166px;top:89.5px" width="8" height="9"><path d="M0 1.2H7.6M0 4.2H7.6M0 7.2H7.6" stroke="#d0d0d0" stroke-width="1.3"/></svg>
<div class="abs" style="left:6px;top:109px;width:172px;height:15px;background:#171717;border-radius:2px"></div>
<svg class="abs" style="left:10.5px;top:111px" width="16" height="12"><circle cx="6" cy="4.6" r="3.2" fill="none" stroke="#c8c8c8" stroke-width="1.3"/><path d="M3.8 7 L1 10" stroke="#c8c8c8" stroke-width="1.5" stroke-linecap="round"/><path d="M9 7H14L11.5 9.9Z" fill="#c8c8c8"/></svg>
<div class="abs" style="left:0;top:127px;width:184px;height:1px;background:#171717"></div>
<div class="abs" style="left:5px;top:142.7px;width:176px;height:1px;background:#212121"></div>
<svg class="abs" style="left:5px;top:131.5px" width="6" height="9"><path d="M1 1 L4.2 4.2 L1 7.4" fill="none" stroke="#c4c4c4" stroke-width="1.25"/></svg>
<div class="t serif" style="left:14.4px;top:128.5px;font-size:10px;color:#c0c0c0">* <span class="sans">动画预设</span></div>
<div class="abs" style="left:5px;top:157.8px;width:176px;height:1px;background:#212121"></div>
<svg class="abs" style="left:5px;top:146.6px" width="6" height="9"><path d="M1 1 L4.2 4.2 L1 7.4" fill="none" stroke="#c4c4c4" stroke-width="1.25"/></svg>
<div class="t serif" style="left:14.4px;top:143.6px;font-size:10px;color:#c0c0c0">3D <span class="sans">通道</span></div>
<div class="abs" style="left:5px;top:172.9px;width:176px;height:1px;background:#212121"></div>
<svg class="abs" style="left:5px;top:161.7px" width="6" height="9"><path d="M1 1 L4.2 4.2 L1 7.4" fill="none" stroke="#c4c4c4" stroke-width="1.25"/></svg>
<div class="t serif" style="left:14.4px;top:158.7px;font-size:9.8px;color:#c0c0c0">Boris FX Mocha</div>
<div class="abs" style="left:5px;top:188.0px;width:176px;height:1px;background:#212121"></div>
<svg class="abs" style="left:5px;top:176.8px" width="6" height="9"><path d="M1 1 L4.2 4.2 L1 7.4" fill="none" stroke="#c4c4c4" stroke-width="1.25"/></svg>
<div class="t serif" style="left:14.4px;top:173.8px;font-size:9.8px;color:#c0c0c0">Cinema 4D</div>
<div class="abs" style="left:5px;top:203.1px;width:176px;height:1px;background:#212121"></div>
<svg class="abs" style="left:5px;top:191.9px" width="6" height="9"><path d="M1 1 L4.2 4.2 L1 7.4" fill="none" stroke="#c4c4c4" stroke-width="1.25"/></svg>
<div class="t serif" style="left:14.4px;top:188.9px;font-size:9.8px;color:#c0c0c0">Keying</div>
<div class="abs" style="left:5px;top:218.2px;width:176px;height:1px;background:#212121"></div>
<svg class="abs" style="left:5px;top:207.0px" width="6" height="9"><path d="M1 1 L4.2 4.2 L1 7.4" fill="none" stroke="#c4c4c4" stroke-width="1.25"/></svg>
<div class="t serif" style="left:14.4px;top:204.0px;font-size:9.8px;color:#c0c0c0">Matte</div>
<div class="abs" style="left:5px;top:233.3px;width:176px;height:1px;background:#212121"></div>
<svg class="abs" style="left:5px;top:222.1px" width="6" height="9"><path d="M1 1 L4.2 4.2 L1 7.4" fill="none" stroke="#c4c4c4" stroke-width="1.25"/></svg>
<div class="t serif" style="left:14.4px;top:219.1px;font-size:9.8px;color:#c0c0c0">proDAD</div>
<div class="abs" style="left:5px;top:248.4px;width:176px;height:1px;background:#212121"></div>
<svg class="abs" style="left:5px;top:237.2px" width="6" height="9"><path d="M1 1 L4.2 4.2 L1 7.4" fill="none" stroke="#c4c4c4" stroke-width="1.25"/></svg>
<div class="t serif" style="left:14.4px;top:234.2px;font-size:9.8px;color:#c0c0c0">RG Magic Bullet</div>
<div class="abs" style="left:5px;top:263.5px;width:176px;height:1px;background:#212121"></div>
<svg class="abs" style="left:5px;top:252.3px" width="6" height="9"><path d="M1 1 L4.2 4.2 L1 7.4" fill="none" stroke="#c4c4c4" stroke-width="1.25"/></svg>
<div class="t serif" style="left:14.4px;top:249.3px;font-size:9.8px;color:#c0c0c0">RG Universe Blur</div>
<div class="abs" style="left:5px;top:278.6px;width:176px;height:1px;background:#212121"></div>
<svg class="abs" style="left:5px;top:267.4px" width="6" height="9"><path d="M1 1 L4.2 4.2 L1 7.4" fill="none" stroke="#c4c4c4" stroke-width="1.25"/></svg>
<div class="t serif" style="left:14.4px;top:264.4px;font-size:9.8px;color:#c0c0c0">RG Universe Distort</div>
<div class="abs" style="left:5px;top:293.7px;width:176px;height:1px;background:#212121"></div>
<svg class="abs" style="left:5px;top:282.5px" width="6" height="9"><path d="M1 1 L4.2 4.2 L1 7.4" fill="none" stroke="#c4c4c4" stroke-width="1.25"/></svg>
<div class="t serif" style="left:14.4px;top:279.5px;font-size:9.8px;color:#c0c0c0">RG Universe Generators</div>
<div class="abs" style="left:5px;top:308.8px;width:176px;height:1px;background:#212121"></div>
<svg class="abs" style="left:5px;top:297.6px" width="6" height="9"><path d="M1 1 L4.2 4.2 L1 7.4" fill="none" stroke="#c4c4c4" stroke-width="1.25"/></svg>
<div class="t serif" style="left:14.4px;top:294.6px;font-size:9.8px;color:#c0c0c0">RG Universe Glow</div>
<div class="abs" style="left:5px;top:323.9px;width:176px;height:1px;background:#212121"></div>
<svg class="abs" style="left:5px;top:312.7px" width="6" height="9"><path d="M1 1 L4.2 4.2 L1 7.4" fill="none" stroke="#c4c4c4" stroke-width="1.25"/></svg>
<div class="t serif" style="left:14.4px;top:309.7px;font-size:9.8px;color:#c0c0c0">RG Universe Motion Graphics</div>
<div class="abs" style="left:5px;top:339.0px;width:176px;height:1px;background:#212121"></div>
<svg class="abs" style="left:5px;top:327.8px" width="6" height="9"><path d="M1 1 L4.2 4.2 L1 7.4" fill="none" stroke="#c4c4c4" stroke-width="1.25"/></svg>
<div class="t serif" style="left:14.4px;top:324.8px;font-size:9.8px;color:#c0c0c0">RG Universe Stylize</div>
<div class="abs" style="left:5px;top:354.1px;width:176px;height:1px;background:#212121"></div>
<svg class="abs" style="left:5px;top:342.9px" width="6" height="9"><path d="M1 1 L4.2 4.2 L1 7.4" fill="none" stroke="#c4c4c4" stroke-width="1.25"/></svg>
<div class="t serif" style="left:14.4px;top:339.9px;font-size:9.8px;color:#c0c0c0">RG Universe Text</div>
<div class="abs" style="left:5px;top:369.2px;width:176px;height:1px;background:#212121"></div>
<svg class="abs" style="left:5px;top:358.0px" width="6" height="9"><path d="M1 1 L4.2 4.2 L1 7.4" fill="none" stroke="#c4c4c4" stroke-width="1.25"/></svg>
<div class="t serif" style="left:14.4px;top:355.0px;font-size:9.8px;color:#c0c0c0">RG Universe Transitions</div>
<div class="abs" style="left:5px;top:384.3px;width:176px;height:1px;background:#212121"></div>
<svg class="abs" style="left:5px;top:373.1px" width="6" height="9"><path d="M1 1 L4.2 4.2 L1 7.4" fill="none" stroke="#c4c4c4" stroke-width="1.25"/></svg>
<div class="t serif" style="left:14.4px;top:370.1px;font-size:9.8px;color:#c0c0c0">RG Universe Utilities</div>
<div class="abs" style="left:5px;top:399.4px;width:176px;height:1px;background:#212121"></div>
<svg class="abs" style="left:5px;top:388.2px" width="6" height="9"><path d="M1 1 L4.2 4.2 L1 7.4" fill="none" stroke="#c4c4c4" stroke-width="1.25"/></svg>
<div class="t serif" style="left:14.4px;top:385.2px;font-size:9.8px;color:#c0c0c0">Vimager</div>
<div class="abs" style="left:5px;top:414.5px;width:176px;height:1px;background:#212121"></div>
<svg class="abs" style="left:5px;top:403.3px" width="6" height="9"><path d="M1 1 L4.2 4.2 L1 7.4" fill="none" stroke="#c4c4c4" stroke-width="1.25"/></svg>
<div class="t serif" style="left:14.4px;top:400.3px;font-size:10px;color:#c0c0c0"><span class="sans">实用工具</span></div>
<div class="abs" style="left:5px;top:429.6px;width:176px;height:1px;background:#212121"></div>
<svg class="abs" style="left:5px;top:418.4px" width="6" height="9"><path d="M1 1 L4.2 4.2 L1 7.4" fill="none" stroke="#c4c4c4" stroke-width="1.25"/></svg>
<div class="t serif" style="left:14.4px;top:415.4px;font-size:10px;color:#c0c0c0"><span class="sans">扭曲</span></div>
<div class="abs" style="left:5px;top:444.7px;width:176px;height:1px;background:#212121"></div>
<svg class="abs" style="left:5px;top:433.5px" width="6" height="9"><path d="M1 1 L4.2 4.2 L1 7.4" fill="none" stroke="#c4c4c4" stroke-width="1.25"/></svg>
<div class="t serif" style="left:14.4px;top:430.5px;font-size:10px;color:#c0c0c0"><span class="sans">抠像</span></div>
<div class="abs" style="left:5px;top:459.8px;width:176px;height:1px;background:#212121"></div>
<svg class="abs" style="left:5px;top:448.6px" width="6" height="9"><path d="M1 1 L4.2 4.2 L1 7.4" fill="none" stroke="#c4c4c4" stroke-width="1.25"/></svg>
<div class="t serif" style="left:14.4px;top:445.6px;font-size:10px;color:#c0c0c0"><span class="sans">文本</span></div>
<div class="abs" style="left:5px;top:474.9px;width:176px;height:1px;background:#212121"></div>
<svg class="abs" style="left:5px;top:463.7px" width="6" height="9"><path d="M1 1 L4.2 4.2 L1 7.4" fill="none" stroke="#c4c4c4" stroke-width="1.25"/></svg>
<div class="t serif" style="left:14.4px;top:460.7px;font-size:10px;color:#c0c0c0"><span class="sans">时间</span></div>
<div class="abs" style="left:5px;top:490.0px;width:176px;height:1px;background:#212121"></div>
<svg class="abs" style="left:5px;top:478.8px" width="6" height="9"><path d="M1 1 L4.2 4.2 L1 7.4" fill="none" stroke="#c4c4c4" stroke-width="1.25"/></svg>
<div class="t serif" style="left:14.4px;top:475.8px;font-size:10px;color:#c0c0c0"><span class="sans">杂色和颗粒</span></div>
<div class="abs" style="left:5px;top:505.1px;width:176px;height:1px;background:#212121"></div>
<svg class="abs" style="left:5px;top:493.9px" width="6" height="9"><path d="M1 1 L4.2 4.2 L1 7.4" fill="none" stroke="#c4c4c4" stroke-width="1.25"/></svg>
<div class="t serif" style="left:14.4px;top:490.9px;font-size:10px;color:#c0c0c0"><span class="sans">模拟</span></div>
<div class="abs" style="left:5px;top:520.2px;width:176px;height:1px;background:#212121"></div>
<svg class="abs" style="left:5px;top:509.0px" width="6" height="9"><path d="M1 1 L4.2 4.2 L1 7.4" fill="none" stroke="#c4c4c4" stroke-width="1.25"/></svg>
<div class="t serif" style="left:14.4px;top:506.0px;font-size:10px;color:#c0c0c0"><span class="sans">模糊和锐化</span></div>
<div class="abs" style="left:183px;top:0;width:12px;height:511px;background:#1d1d1d"></div>
<div class="abs" style="left:184.5px;top:-6px;width:9px;height:308px;background:#343434;border-radius:4.5px"></div>
</div>
<!-- RENDER QUEUE : origin (0,554) -->
<div class="abs" id="rqwrap" style="left:0;top:554px;width:1280px;height:224px;background:#0e3564;border-radius:0 0 6px 6px;overflow:hidden">
<div class="abs" style="left:0.8px;top:0.3px;width:1278.4px;height:222.9px;background:#2d8ceb;border-radius:0 0 6px 6px"></div>
<div class="panel" id="rq" style="left:2px;top:1.5px;width:1275.8px;height:220.5px;border-radius:0 0 4.5px 4.5px">
 <div class="abs" style="left:-2px;top:-1.5px;width:1280px;height:224px">
  <!-- tab row -->
  <svg class="abs" style="left:0;top:0" width="140" height="30" viewBox="0 554 140 30">
    <path d="M10.4 565 L15 569.6 M15 565 L10.4 569.6" stroke="#a0a0a0" stroke-width="1.1"/>
    <path d="M76 564.5H83.5M76 567.5H83.5M76 570.5H83.5" stroke="#c8c8c8" stroke-width="1.3"/>
    <rect x="115" y="562" width="9.6" height="9.6" fill="#8e4b2a"/>
  </svg>
  <div class="t b wh" style="left:24px;top:6.5px;font-size:10.8px">渲染队列</div>
  <div class="ul" style="left:10px;top:22px;width:74px"></div>
  <div class="t" style="left:134px;top:7px;font-size:10px;color:#b6b6b6;letter-spacing:-0.1px">Logo_12_Main_Comp</div>
  <!-- progress section -->
  <div class="abs" style="left:8.5px;top:33px;width:1066px;height:36px;background:#1a1a1a;border-radius:6px 6px 0 0"></div>
  <svg class="abs" style="left:14px;top:46px" width="7" height="9"><path d="M1.4 1 L4.8 4.3 L1.4 7.6" fill="none" stroke="#c8c8c8" stroke-width="1.25"/></svg>
  <div class="t sb" style="left:27px;top:44px;font-size:12px;color:#e0e0e0;letter-spacing:0.2px">当前渲染</div>
  <div class="abs" style="left:89.5px;top:42px;width:369.5px;height:17px;border-radius:8.5px;background:#2a2a2a;overflow:hidden">
    <div class="abs" style="left:0;top:0;width:100px;height:17px;background:#2e8cea"></div>
    <div class="abs" style="left:99.5px;top:0;width:6px;height:17px;background:#1fc521"></div>
  </div>
  <div class="t" style="left:472.5px;top:45px;font-size:11px;color:#dcdcdc;letter-spacing:-0.1px">27%</div>
  <div class="t" style="left:533px;top:45px;font-size:11px;color:#dcdcdc;letter-spacing:0.55px">(81/300)</div>
  <div class="abs" style="left:609.5px;top:39px;width:55.5px;height:23.5px;border-radius:12px;background:#a9a9a9"></div>
  <svg class="abs" style="left:616px;top:44px" width="14" height="14"><circle cx="7" cy="6.6" r="5.8" fill="none" stroke="#2a2a2a" stroke-width="1.6"/><rect x="6" y="5.7" width="2" height="4.2" fill="#2a2a2a"/><circle cx="7" cy="3.8" r="1.15" fill="#2a2a2a"/></svg>
  <div class="t sb" style="left:635px;top:44px;font-size:12px;color:#2c2c2c">信息</div>
  <div class="abs" style="left:678.5px;top:42px;width:1px;height:17px;background:#474747"></div>
  <div class="t" style="left:693.5px;top:44px;font-size:12px;color:#d4d4d4">已用时间:</div>
  <div class="t b" style="left:785px;top:44px;font-size:11px;color:#f2f2f2;letter-spacing:-0.35px">00:00:04</div>
  <div class="abs" style="left:876.5px;top:42px;width:1px;height:17px;background:#474747"></div>
  <div class="t" style="left:892px;top:44px;font-size:12px;color:#d4d4d4">剩余时间:</div>
  <div class="t b" style="left:983px;top:44px;font-size:11px;color:#f2f2f2;letter-spacing:0.2px">--:--:--</div>
  <!-- buttons -->
  <div class="abs" style="left:1134px;top:38.5px;width:61px;height:24.5px;border-radius:12.5px;background:#1a1a1a;border:2px solid #dadada"></div>
  <svg class="abs" style="left:1142px;top:42.5px" width="17" height="17"><circle cx="8.1" cy="7.9" r="7.1" fill="#c8c8c8"/><rect x="5.4" y="4.4" width="1.9" height="7" fill="#222"/><rect x="8.9" y="4.4" width="1.9" height="7" fill="#222"/></svg>
  <div class="t b" style="left:1162px;top:44px;font-size:12px;color:#f4f4f4">暂停</div>
  <div class="abs" style="left:1208px;top:38.5px;width:55.5px;height:24.5px;border-radius:12.5px;background:#1d1d1d;border:2px solid #6c6c6c"></div>
  <svg class="abs" style="left:1213px;top:42.5px" width="17" height="17"><circle cx="8.4" cy="7.9" r="7.2" fill="#e2303c"/><rect x="5.2" y="4.7" width="6.4" height="6.4" rx="0.8" fill="#231315"/></svg>
  <div class="t sb" style="left:1233px;top:44px;font-size:12px;color:#a4a4a4">停止</div>
  <!-- header row -->
  <div class="abs" style="left:0;top:68px;width:1280px;height:1.5px;background:#1b1b1b"></div><div class="abs" style="left:0;top:69.5px;width:1280px;height:15.5px;background:#323232"></div>
  <svg class="abs" style="left:0;top:69px" width="1280" height="17" viewBox="0 623 1280 17">
    <g fill="#454545"><rect x="15.5" y="625.5" width="1" height="12"/><rect x="55.5" y="625.5" width="1" height="12"/><rect x="96" y="625.5" width="1" height="12"/><rect x="293.5" y="625.5" width="1" height="12"/><rect x="766" y="625.5" width="1" height="12"/><rect x="855" y="625.5" width="1" height="12"/><rect x="971.5" y="625.5" width="1" height="12"/></g>
    <path d="M60 626.4 H65.4 L70.8 631.8 L66.4 636.4 L60 630.2 Z" fill="#c8c8c8"/><circle cx="62.4" cy="628.8" r="1.1" fill="#2f2f2f"/>
  </svg>
  <div class="t" style="left:20.5px;top:71px;font-size:10.5px;color:#b4b4b4">渲染</div>
  <div class="t" style="left:79px;top:71px;font-size:8.5px;color:#b4b4b4;font-style:italic">#</div>
  <div class="t" style="left:101px;top:71px;font-size:10.8px;color:#b4b4b4">合成名称</div>
  <div class="t" style="left:298.5px;top:71px;font-size:10.5px;color:#b4b4b4">已启动</div>
  <div class="t" style="left:771.5px;top:71px;font-size:10.5px;color:#b4b4b4">状态</div>
  <div class="t" style="left:860.5px;top:71px;font-size:10.5px;color:#b4b4b4">渲染时间</div>
  <!-- row 1 -->
  <div class="abs" style="left:0;top:85.5px;width:1263.5px;height:17.5px;background:#1e1e1e"></div>
  <svg class="abs" style="left:6px;top:91px" width="10" height="7"><path d="M1.2 1.2 L4.6 4.4 L8 1.2" fill="none" stroke="#c8c8c8" stroke-width="1.25"/></svg>
  <div class="abs" style="left:59.5px;top:89.5px;width:9.5px;height:9.5px;background:#8e4b2a"></div>
  <div class="t" style="left:76px;top:89.5px;font-size:10px;color:#b4b4b4">1</div>
  <div class="t b" style="left:100.5px;top:88.5px;font-size:10.5px;color:#d4d4d4;letter-spacing:-0.15px">Logo_12_Main_Comp</div>
  <div class="t serif" style="left:296px;top:88.5px;font-size:9.8px;color:#b8b8b8;letter-spacing:-0.1px">2021/11/20, GMT+8 11:05:33</div>
  <div class="t" style="left:769.5px;top:90px;font-size:9.8px;color:#b4b4b4">正在渲染</div>
  <div class="t" style="left:857.5px;top:88px;font-size:10px;color:#b4b4b4">-</div>
  <!-- row 2 -->
  <div class="abs" style="left:0;top:119.5px;width:1263.5px;height:1px;background:#1e1e1e"></div>
  <svg class="abs" style="left:23px;top:106.5px" width="6" height="9"><path d="M1 1 L4.2 4.2 L1 7.4" fill="none" stroke="#c4c4c4" stroke-width="1.25"/></svg>
  <div class="t b" style="left:37.5px;top:105.5px;font-size:9.8px;color:#c4c4c4">渲染设置:</div>
  <svg class="abs" style="left:90px;top:108px" width="9" height="6"><path d="M1 1 L4 4 L7 1" fill="none" stroke="#3c3c3c" stroke-width="1.2"/></svg>
  <div class="t" style="left:103.5px;top:105.5px;font-size:10px;color:#959595;letter-spacing:-0.2px">自定义: “最佳设置”</div>
  <div class="t b" style="left:342.5px;top:105.5px;font-size:9.8px;color:#c4c4c4">日志:</div>
  <div class="abs" style="left:368.5px;top:103px;width:102px;height:16.5px;background:#1a1a1a;border:1px solid #2e2e2e;border-radius:2px"></div>
  <div class="t b" style="left:374.5px;top:104.5px;font-size:10px;color:#ececec;letter-spacing:-0.2px">仅错误</div>
  <svg class="abs" style="left:458.5px;top:108.5px" width="9" height="6"><path d="M1 1 L4.2 4.2 L7.4 1" fill="none" stroke="#c8c8c8" stroke-width="1.3"/></svg>
  <!-- row 3 -->
  <div class="abs" style="left:0;top:137px;width:1263.5px;height:1px;background:#1e1e1e"></div>
  <svg class="abs" style="left:23px;top:123.5px" width="6" height="9"><path d="M1 1 L4.2 4.2 L1 7.4" fill="none" stroke="#c4c4c4" stroke-width="1.25"/></svg>
  <div class="abs" style="left:37px;top:122px;width:44.5px;height:14px;background:#474747"></div>
  <div class="t b" style="left:37.5px;top:122.5px;font-size:9.8px;color:#d0d0d0">输出模块:</div>
  <svg class="abs" style="left:90px;top:125px" width="9" height="6"><path d="M1 1 L4 4 L7 1" fill="none" stroke="#3c3c3c" stroke-width="1.2"/></svg>
  <div class="t" style="left:103.5px;top:122.5px;font-size:10px;color:#959595">无损</div>
  <div class="abs" style="left:300px;top:122px;width:12.5px;height:14px;border:1px solid #303030"></div>
  <div class="abs" style="left:314px;top:122px;width:13px;height:14px;border:1px solid #303030"></div>
  <svg class="abs" style="left:300px;top:122px" width="28" height="14"><path d="M6.2 3.4V10.6M2.6 7H9.8M17 7H24" stroke="#3e3e3e" stroke-width="1.3"/></svg>
  <div class="t b" style="left:332px;top:122.5px;font-size:9.8px;color:#c4c4c4">输出到:</div>
  <svg class="abs" style="left:374.5px;top:125px" width="9" height="6"><path d="M1 1 L4 4 L7 1" fill="none" stroke="#3c3c3c" stroke-width="1.2"/></svg>
  <div class="t serif" style="left:388px;top:122.5px;font-size:9.8px;color:#b0b0b0">Logo_12_Main_Comp.mov</div>
  <!-- status bar -->
  <div class="abs" style="left:0;top:200.5px;width:1280px;height:24px;background:#1c1c1c"></div>
  <div class="t" style="left:8.5px;top:204.5px;font-size:12px;color:#bebebe;letter-spacing:0.2px">消息: 正在渲染1/1</div>
  <div class="t" style="left:228px;top:204.5px;font-size:12px;color:#bebebe;letter-spacing:-0.23px">RAM: 已使用 16.0 GB 的 46%</div>
  <div class="t" style="left:447px;top:204.5px;font-size:12px;color:#bebebe;letter-spacing:-0.03px">渲染已开始: 2021/11/20, GMT+8 11:05:33</div>
  <div class="t" style="left:704px;top:204.5px;font-size:12px;color:#bebebe">已用总时间: 5 秒</div>
  <div class="abs" style="left:1141.5px;top:205.5px;width:12px;height:12px;border:1.7px solid #c6c6c6;border-radius:1.5px"></div>
  <div class="t" style="left:1156.5px;top:204.5px;font-size:12px;color:#c4c4c4;letter-spacing:0.25px">队列完成时通知</div>
  <svg class="abs" style="left:1248px;top:205px" width="13" height="13"><path d="M5 1.4 Q8.4 1.6 8.4 5.4 V7.8 L9.8 9.4 H0.6 L1.8 7.8 V5.4 Q1.8 1.6 5 1.4Z" fill="#3e3e3e"/><circle cx="9.4" cy="9.6" r="2.2" fill="none" stroke="#3e3e3e" stroke-width="1"/></svg>
 </div>
</div>
</div>
<div class="abs" style="left:0;top:17px;width:1px;height:537px;background:#1a1a1a"></div>
</div>
</body></html>
